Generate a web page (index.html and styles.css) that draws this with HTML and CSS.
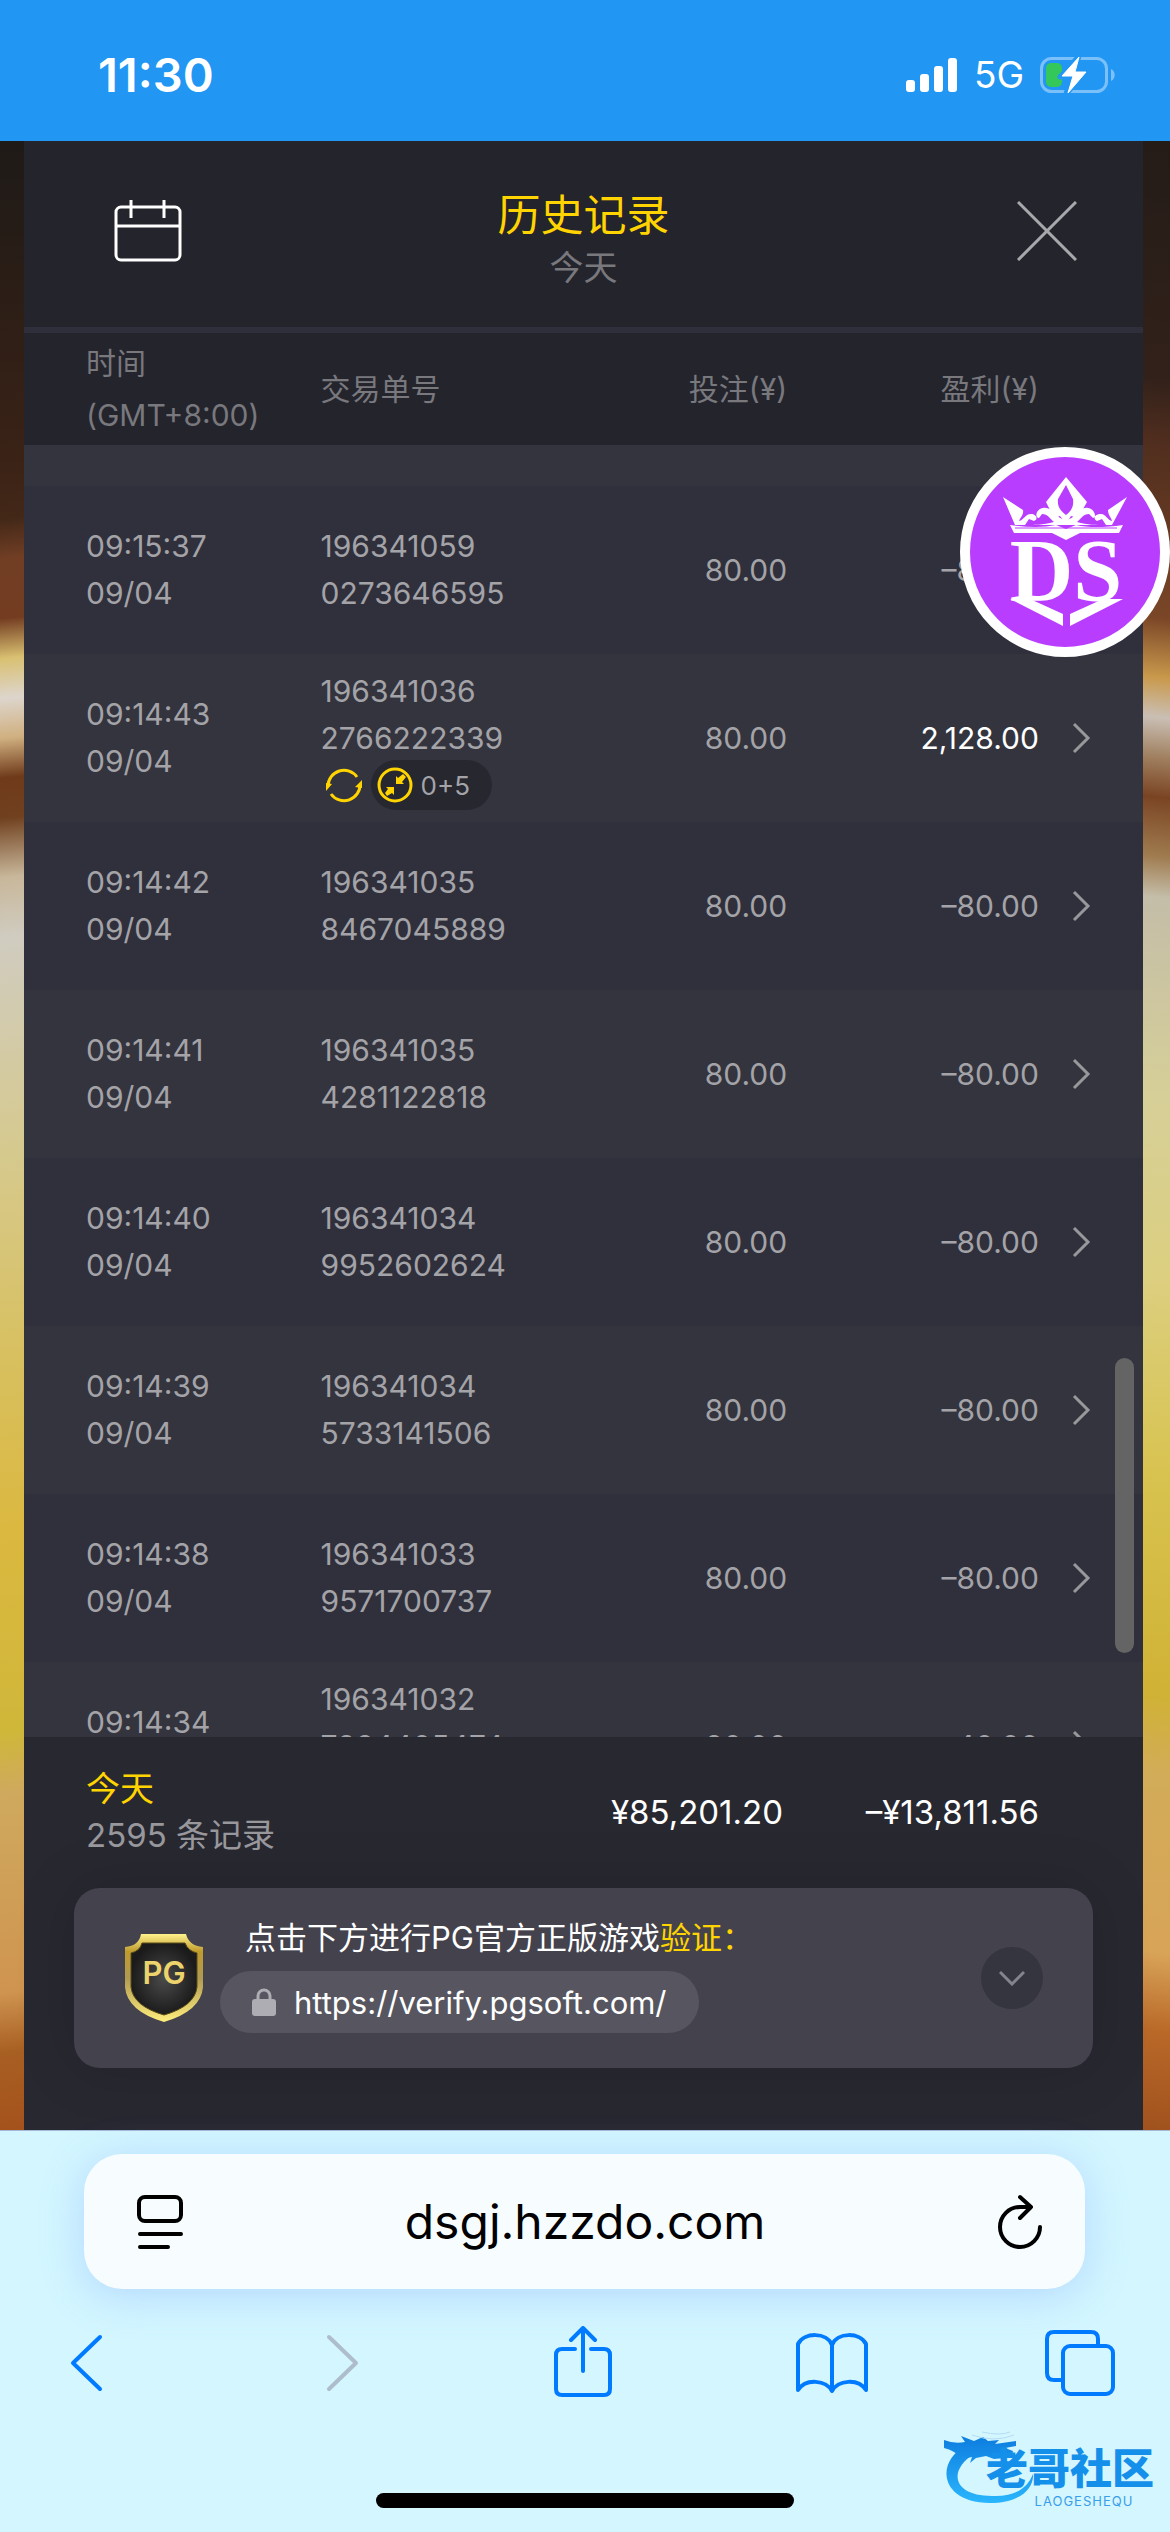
FILE: index.html
```html
<!DOCTYPE html>
<html lang="zh-CN">
<head>
  <meta charset="UTF-8" />
  <meta name="viewport" content="width=device-width, initial-scale=1" />
  <title>历史记录</title>
  <link rel="stylesheet" href="styles.css">
</head>
<body>

  <!-- Status bar -->
  <header class="status-bar">
    <span class="clock">11:30</span>
    <div class="status-icons">
      <svg width="52" height="34" viewBox="0 0 52 34" fill="#fff">
        <rect x="0" y="22" width="9" height="12" rx="3"/>
        <rect x="14" y="16" width="9" height="18" rx="3"/>
        <rect x="28" y="8" width="9" height="26" rx="3"/>
        <rect x="42" y="0" width="9" height="34" rx="3"/>
      </svg>
      <span class="network">5G</span>
      <svg width="76" height="40" viewBox="0 0 76 40">
        <rect x="1.500" y="3.500" width="65" height="33" rx="10" fill="none" stroke="#7cc0f9" stroke-width="3"/>
        <path d="M71 14c5 2 5 10 0 12z" fill="#7cc0f9"/>
        <rect x="6" y="8" width="16" height="24" rx="5" fill="#34c759"/>
        <path d="M39 1L20 22h11l-5 17 20-22H34z" fill="#fff" stroke="#2196f3" stroke-width="5" stroke-linejoin="round"/>
        <path d="M39 2L22 21h11l-5 17 18-21H35z" fill="#fff" stroke="#fff" stroke-width="1" stroke-linejoin="round"/>
      </svg>
    </div>
  </header>

  <!-- Game -->
  <main class="game">
    <section class="panel">
      <div class="panel-header">
        <button class="icon-btn" aria-label="日历">
          <svg width="68" height="62" viewBox="0 0 68 62" fill="none" stroke="#fff" stroke-width="3">
            <rect x="2" y="7" width="64" height="53" rx="5"/>
            <path d="M2 26h64M17 0v18M50 0v18"/>
          </svg>
        </button>
        <div class="panel-title">
          <h1>历史记录</h1>
          <p>今天</p>
        </div>
        <button class="icon-btn" aria-label="关闭">
          <svg width="60" height="60" viewBox="0 0 60 60" fill="none" stroke="#a8a8ac" stroke-width="3">
            <path d="M1 1l58 58M59 1L1 59"/>
          </svg>
        </button>
      </div>

      <div class="records">
        <table>
          <colgroup>
            <col class="col-time"><col class="col-order"><col class="col-bet"><col class="col-profit"><col>
          </colgroup>
          <thead>
            <tr>
              <th>时间<br>(GMT+8:00)</th>
              <th>交易单号</th>
              <th class="num">投注(¥)</th>
              <th class="num">盈利(¥)</th>
              <th></th>
            </tr>
          </thead>
          <tbody>
            <tr class="stub"><td colspan="5"></td></tr>
            <tr>
              <td>09:15:37<br>09/04</td>
              <td>196341059<br>0273646595</td>
              <td class="num">80.00</td>
              <td class="num">–80.00</td>
              <td><svg class="arrow" viewBox="0 0 18 32"><path d="M2 2l14 14L2 30"/></svg></td>
            </tr>
            <tr>
              <td>09:14:43<br>09/04</td>
              <td>196341036<br>2766222339
                <div class="tags">
                  <svg width="38" height="38" viewBox="0 0 38 38">
                    <g fill="none" stroke="#ffd400" stroke-width="3">
                      <path d="M3 20a16 16 0 0 1 29-9"/>
                      <path d="M35 18a16 16 0 0 1-29 10"/>
                    </g>
                    <path d="M1 25V17l6 1zM37 14v8l-7-1z" fill="#ffd400"/>
                  </svg>
                  <span class="tag">
                    <svg width="36" height="36" viewBox="0 0 36 36">
                      <circle cx="18" cy="18" r="16" fill="none" stroke="#ffd400" stroke-width="3"/>
                      <path d="M19 17V9l2 2 5-4 3 3-4 5 2 2zM17 20v8l-2-2-5 3-2-3 3-4-2-2z" fill="#ffd400"/>
                    </svg>
                    0+5
                  </span>
                </div>
              </td>
              <td class="num">80.00</td>
              <td class="num win">2,128.00</td>
              <td><svg class="arrow" viewBox="0 0 18 32"><path d="M2 2l14 14L2 30"/></svg></td>
            </tr>
            <tr>
              <td>09:14:42<br>09/04</td>
              <td>196341035<br>8467045889</td>
              <td class="num">80.00</td>
              <td class="num">–80.00</td>
              <td><svg class="arrow" viewBox="0 0 18 32"><path d="M2 2l14 14L2 30"/></svg></td>
            </tr>
            <tr>
              <td>09:14:41<br>09/04</td>
              <td>196341035<br>4281122818</td>
              <td class="num">80.00</td>
              <td class="num">–80.00</td>
              <td><svg class="arrow" viewBox="0 0 18 32"><path d="M2 2l14 14L2 30"/></svg></td>
            </tr>
            <tr>
              <td>09:14:40<br>09/04</td>
              <td>196341034<br>9952602624</td>
              <td class="num">80.00</td>
              <td class="num">–80.00</td>
              <td><svg class="arrow" viewBox="0 0 18 32"><path d="M2 2l14 14L2 30"/></svg></td>
            </tr>
            <tr>
              <td>09:14:39<br>09/04</td>
              <td>196341034<br>5733141506</td>
              <td class="num">80.00</td>
              <td class="num">–80.00</td>
              <td><svg class="arrow" viewBox="0 0 18 32"><path d="M2 2l14 14L2 30"/></svg></td>
            </tr>
            <tr>
              <td>09:14:38<br>09/04</td>
              <td>196341033<br>9571700737</td>
              <td class="num">80.00</td>
              <td class="num">–80.00</td>
              <td><svg class="arrow" viewBox="0 0 18 32"><path d="M2 2l14 14L2 30"/></svg></td>
            </tr>
            <tr>
              <td>09:14:34<br>&nbsp;</td>
              <td>196341032<br>7924405474<div class="tags"></div></td>
              <td class="num">80.00</td>
              <td class="num">40.00</td>
              <td><svg class="arrow" viewBox="0 0 18 32"><path d="M2 2l14 14L2 30"/></svg></td>
            </tr>
          </tbody>
        </table>
        <div class="scroll-thumb"></div>
      </div>

      <div class="panel-footer">
        <div class="summary">
          <div class="summary-day">
            <strong>今天</strong>
            <span>2595 条记录</span>
          </div>
          <span class="total-bet">¥85,201.20</span>
          <span class="total-profit">–¥13,811.56</span>
        </div>

        <div class="verify">
          <svg class="shield" width="80" height="90" viewBox="0 0 80 90">
            <defs>
              <linearGradient id="gold" x1="0" y1="0" x2="0" y2="1">
                <stop offset="0" stop-color="#fff28a"/>
                <stop offset=".2" stop-color="#bf9b2e"/>
                <stop offset=".5" stop-color="#b09a52"/>
                <stop offset="1" stop-color="#ffee7c"/>
              </linearGradient>
              <radialGradient id="steel">
                <stop offset="0" stop-color="#4a4a4a"/>
                <stop offset="1" stop-color="#1b1b1b"/>
              </radialGradient>
            </defs>
            <path d="M17 1h45q3 12 17 13v40q-2 24-39 35Q3 78 1 54V14Q15 13 17 1z" fill="url(#gold)"/>
            <path d="M18 10h43q3 8 12 10v34q-2 19-33 28Q9 73 7 54V20q9-2 11-10z" fill="url(#steel)" stroke="#5a4a18"/>
            <text x="40" y="51" text-anchor="middle">PG</text>
          </svg>
          <div class="verify-body">
            <p>点击下方进行PG官方正版游戏<em>验证：</em></p>
            <a class="verify-link" href="https://verify.pgsoft.com/">
              <svg width="24" height="28" viewBox="0 0 24 28">
                <rect x="0" y="11" width="24" height="17" rx="3" fill="#aeadb4"/>
                <path d="M6 12V8a6 6 0 0 1 12 0v4" fill="none" stroke="#aeadb4" stroke-width="3"/>
              </svg>
              https://verify.pgsoft.com/
            </a>
          </div>
          <button class="expand" aria-label="展开">
            <svg width="26" height="16" viewBox="0 0 26 16" fill="none" stroke="#85848c" stroke-width="3"><path d="M1 2l12 12L25 2"/></svg>
          </button>
        </div>
      </div>
    </section>

    <!-- Floating club logo -->
    <a class="club" href="#" aria-label="DS">
      <svg viewBox="0 0 210 210">
        <circle cx="105" cy="105" r="100" fill="#b93dff" stroke="#fff" stroke-width="10"/>
        <g fill="#fff">
          <path fill-rule="evenodd" d="M106 30l21 25-9 16-7-2-5 8-6-8-6 2-8-16zM106 38L98 52c-1 8 3 12 8 16 5-4 8-8 7-16z"/>
          <path d="M43 50l20 13c1 5-3 8-4 11 5-1 6-7 12-7 5 0 8 5 3 7l-5-2-4 6c10 0 17 0 29-3-5-4-6-8-12-8l-3 4c-6-1-1-12 7-10 9 1 9 10 20 12 11-2 10-11 19-12 8-2 13 9 8 10l-4-4c-6 0-7 4-12 8 11 3 18 3 29 3l-4-6-5 2c-5-3-2-7 4-7 5 0 6 6 11 7-1-4-4-6-4-11l19-13-15 28H55z"/>
          <path d="M50 78q28 4 46 0l10 4 10-4q18 4 47 0l-4 8h-39l-14 7-14-7H54z"/>
          <path d="M50 152h20l33 15v12zM163 152h-20l-33 15v12z"/>
        </g>
        <path d="M55 81h102" stroke="#b93dff" stroke-width="1"/>
        <text x="106" y="153" text-anchor="middle">DS</text>
      </svg>
    </a>
  </main>

  <!-- Browser chrome -->
  <footer class="browser">
    <form class="address-bar">
      <button type="button" aria-label="页面设置">
        <svg width="46" height="56" viewBox="0 0 46 56" fill="none" stroke="#000" stroke-width="4" stroke-linecap="round">
          <rect x="2" y="3" width="42" height="24" rx="6"/>
          <path d="M3 40h41M3 53h28"/>
        </svg>
      </button>
      <input type="text" value="dsgj.hzzdo.com" aria-label="地址">
      <button type="button" aria-label="刷新">
        <svg width="46" height="56" viewBox="0 0 46 56" fill="none" stroke="#000" stroke-width="4" stroke-linecap="round" stroke-linejoin="round">
          <path d="M23 13a20 20 0 1 0 20 20M23 3l11 10-11 11M23 13h10"/>
        </svg>
      </button>
    </form>

    <nav class="toolbar">
      <button aria-label="后退">
        <svg width="72" height="72" viewBox="0 0 72 72"><path d="M50 11L23 37l27 26"/></svg>
      </button>
      <button class="off" aria-label="前进" disabled>
        <svg width="72" height="72" viewBox="0 0 72 72"><path d="M30 11l27 26-27 26"/></svg>
      </button>
      <button aria-label="分享">
        <svg width="72" height="72" viewBox="0 0 72 72"><path d="M28 23H15q-6 0-6 6v34q0 6 6 6h42q6 0 6-6V29q0-6-6-6H44M36 45V3M24 14L36 2l12 12"/></svg>
      </button>
      <button aria-label="书签">
        <svg width="72" height="72" viewBox="0 0 72 72"><path d="M36 19C31 6 8 6 2 18v46c8-12 28-10 34 1 6-11 26-13 34-1V18C64 6 41 6 36 19zM36 19v46"/></svg>
      </button>
      <button aria-label="标签页">
        <svg width="72" height="72" viewBox="0 0 72 72"><path d="M18 54H10q-7 0-7-7V13q0-7 7-7h37q7 0 7 7v7"/><rect x="19" y="20" width="50" height="48" rx="7"/></svg>
      </button>
    </nav>

    <div class="home-bar"></div>

    <div class="watermark">
      <svg width="92" height="76" viewBox="0 0 92 76">
        <defs>
          <linearGradient id="wave" x1="0" y1="0" x2="0" y2="76" gradientUnits="userSpaceOnUse">
            <stop offset="0" stop-color="#0a78dc"/>
            <stop offset="1" stop-color="#2cb8ff"/>
          </linearGradient>
        </defs>
        <g fill="url(#wave)">
          <path d="M22 16C-8 30-6 73 46 73 74 73 90 60 89 44 83 59 70 67 48 66 8 66 4 40 30 24z"/>
          <path d="M0 10q10 4 21 2l-4-6 13 5 9-4 5 4 11-1-4 4 21-3v5l-11 2 8 3-1 4-13-1 6 4-11 1-8-3-10 2-6 5 2-6-10 2q-6-8-18-11z"/>
        </g>
        <path d="M28 5q22 8 42 0M38 2q18 4 28 0" fill="none" stroke="#b5dcf5"/>
      </svg>
      <div class="watermark-text">
        <b>老哥社区</b>
        <small>LAOGESHEQU</small>
      </div>
    </div>
  </footer>

</body>
</html>
```

FILE: styles.css
```css
* {
  box-sizing: border-box;
}

body {
  margin: 0;
  height: 100vh;
  display: flex;
  flex-direction: column;
  overflow: hidden;
  background: #d3f6ff;
  color: #a3a3a8;
  font-family: Inter, "Noto Sans CJK SC", sans-serif;
  font-size: 30px;
  font-weight: 400;
}

h1, p {
  margin: 0;
  font-weight: 400;
}

button {
  padding: 0;
  border: none;
  background: none;
  cursor: pointer;
}

svg {
  display: block;
  flex: none;
}

/* status bar */
.status-bar {
  flex: none;
  height: 141px;
  padding: 8px 54px 0 98px;
  display: flex;
  align-items: center;
  justify-content: space-between;
  background: #2196f3;
  color: #fff;
}

.clock {
  font-size: 47px;
  font-weight: 600;
}

.status-icons {
  display: flex;
  align-items: center;
  gap: 16px;
}

.network {
  font-size: 37px;
}

/* game area with the artwork showing at both sides */
.game {
  position: relative;
  flex: 1;
  min-height: 0;
  display: flex;
  padding: 0 27px 0 24px;
  background:
    linear-gradient(174deg, #1e1a17 0, #3a2216 16%, #432818 19%, #713e24 21%, #743d22 24%, #d9c071 26%, #ddd5cc 28%, #d0b080 30%, #6f3a1a 32%, #70401f 34%, #c8b79a 37%, #d0ccc0 40%, #d6c98d 51%, #d8c060 61%, #dbb83f 70%, #cfb73a 80%, #cfa95e 83%, #cf9450 93%, #a85f22 96%, #a4521c 100%) left / 24px 100% no-repeat,
    linear-gradient(186deg, #241c17 0, #32211a 12%, #4f2d1e 15%, #7a4627 24%, #c9994c 27%, #cabfb4 29%, #a08060 31%, #7a4423 33%, #a07c50 36%, #c4bda8 38%, #d6cf98 48%, #dccf80 57%, #d8c350 67%, #d0b235 78%, #d2ac58 82%, #d8a458 91%, #b96828 95%, #a0521e 100%) right / 27px 100% no-repeat;
}

.panel {
  flex: 1;
  min-width: 0;
  display: flex;
  flex-direction: column;
  background: #282831;
}

.panel-header {
  flex: none;
  height: 192px;
  padding: 0 66px 6px 90px;
  display: flex;
  align-items: center;
  background: #24242d;
  border-bottom: 6px solid #2f2f3b;
}

.panel-title {
  flex: 1;
  padding: 16px 32px 0 0;
  text-align: center;
}

.panel-title h1 {
  font-size: 43px;
  line-height: 58px;
  color: #ffd400;
}

.panel-title p {
  font-size: 34px;
  line-height: 48px;
  color: #78787d;
}

/* records */
.records {
  position: relative;
  flex: 1;
  min-height: 0;
  overflow: hidden;
}

table {
  width: 100%;
  table-layout: fixed;
  border-collapse: collapse;
}

.col-time {
  width: 26.5%;
}

.col-order {
  width: 21.5%;
}

.col-bet {
  width: 20.2%;
}

.col-profit {
  width: 22.5%;
}

th, td {
  padding: 0;
  text-align: left;
  vertical-align: middle;
  white-space: nowrap;
}

th {
  height: 112px;
  line-height: 52px;
  font-weight: 400;
  color: #78787d;
  background: #24242d;
}

td {
  height: 168px;
  line-height: 47px;
}

th:first-child,
td:first-child {
  padding-left: 62px;
}

td:last-child {
  padding-left: 32px;
}

.num {
  text-align: right;
}

.win {
  color: #fff;
}

tbody tr {
  background: #34343e;
}

tbody tr:nth-child(even) {
  background: #30303c;
}

.stub td {
  height: 41px;
}

.arrow {
  width: 20px;
  height: 32px;
  fill: none;
  stroke: #97979c;
  stroke-width: 3;
}

.tags {
  height: 47px;
  padding-left: 4px;
  display: flex;
  align-items: center;
  gap: 8px;
}

.tag {
  height: 50px;
  padding: 0 22px 0 6px;
  display: flex;
  align-items: center;
  gap: 8px;
  border-radius: 25px;
  background: #27272f;
  font-size: 26px;
}

.scroll-thumb {
  position: absolute;
  top: 73%;
  right: 9px;
  width: 19px;
  height: 21%;
  border-radius: 10px;
  background: #646464;
}

/* footer */
.panel-footer {
  flex: none;
  padding: 28px 50px 62px;
}

.summary {
  display: flex;
  align-items: center;
  padding: 0 54px 0 12px;
  margin-bottom: 29px;
  font-size: 33px;
  color: #fff;
}

.summary-day {
  flex: 1;
  display: flex;
  flex-direction: column;
  line-height: 47px;
}

.summary-day strong {
  font-size: 34px;
  font-weight: 400;
  color: #ffd400;
}

.summary-day span {
  color: #97979c;
}

.total-profit {
  width: 256px;
  text-align: right;
}

.verify {
  height: 180px;
  padding: 0 50px;
  display: flex;
  align-items: center;
  border-radius: 26px;
  background: #43424d;
  box-shadow: 0 0 60px rgba(0, 0, 0, 0.15);
}

.shield text {
  font-size: 31px;
  font-weight: 600;
  fill: #ecd36c;
}

.verify-body {
  flex: 1;
  padding: 0 0 8px 16px;
  color: #fff;
}

.verify-body p {
  padding-left: 25px;
  font-size: 31px;
  line-height: 46px;
  margin-bottom: 10px;
}

.verify-body em {
  font-style: normal;
  color: #ffd400;
}

.verify-link {
  display: inline-flex;
  align-items: center;
  gap: 18px;
  height: 62px;
  padding: 0 32px;
  border-radius: 31px;
  background: #565560;
  color: #fff;
  font-size: 31px;
  text-decoration: none;
}

.expand {
  width: 62px;
  height: 62px;
  display: flex;
  align-items: center;
  justify-content: center;
  border-radius: 50%;
  background: #353540;
}

.club {
  position: absolute;
  top: 306px;
  right: 0;
  width: 210px;
}

.club text {
  font-family: "Liberation Serif", serif;
  font-size: 88px;
  font-weight: 700;
  fill: #fff;
}

/* browser */
.browser {
  position: relative;
  flex: none;
  padding: 23px 0 24px;
  border-top: 1px solid #a5b8d8;
}

.address-bar {
  height: 135px;
  margin: 0 85px 0 84px;
  padding: 0 42px 0 53px;
  display: flex;
  align-items: center;
  border-radius: 38px;
  background: #f7fdff;
  box-shadow: 0 6px 40px rgba(120, 160, 255, 0.35);
}

.address-bar input {
  flex: 1;
  min-width: 0;
  padding: 0 10px 0 0;
  border: none;
  background: none;
  color: #000;
  font-family: inherit;
  font-size: 48px;
  text-align: center;
}

.toolbar {
  display: flex;
  justify-content: space-between;
  margin: 37px 54px 95px 50px;
}

.toolbar svg {
  fill: none;
  stroke: #007aff;
  stroke-width: 4;
  stroke-linecap: round;
  stroke-linejoin: round;
}

.toolbar .off svg {
  stroke: #aebdcc;
}

.home-bar {
  width: 418px;
  height: 15px;
  margin: 0 auto;
  border-radius: 8px;
  background: #000;
}

.watermark {
  position: absolute;
  right: 16px;
  bottom: 24px;
  display: flex;
}

.watermark-text {
  margin: 14px 0 0 -50px;
  display: flex;
  flex-direction: column;
  align-items: center;
}

.watermark b {
  font-size: 42px;
  line-height: 50px;
  font-weight: 900;
  color: #148fea;
}

.watermark small {
  margin-left: 28px;
  font-size: 13px;
  line-height: 14px;
  letter-spacing: 1px;
  color: #3b9eea;
}
```
